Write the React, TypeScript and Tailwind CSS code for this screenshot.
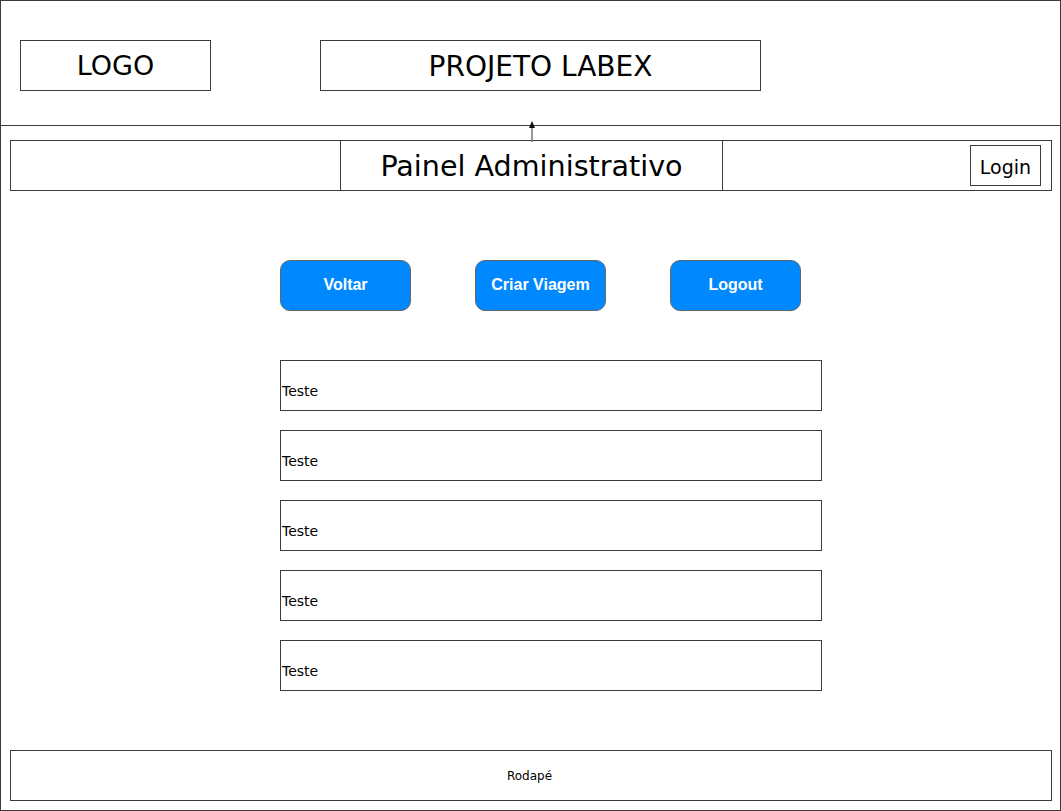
/**
 * Painel Administrativo - wireframe page
 */

const sketchFont = { fontFamily: '"DejaVu Sans", Verdana, sans-serif' };

const ACTIONS = ['Voltar', 'Criar Viagem', 'Logout'];
const TRIPS = ['Teste', 'Teste', 'Teste', 'Teste', 'Teste'];

export default function App() {
  return (
    <div
      className="relative w-[1061px] h-[811px] bg-white border border-[#3c3c3c] flex flex-col text-black"
      style={sketchFont}
    >
      {/* Header */}
      <header className="h-[125px] shrink-0 border-b border-[#3c3c3c] flex items-start pt-[39px] pl-[19px]">
        <div className="w-[191px] h-[51px] border border-[#3c3c3c] flex items-center justify-center text-[27px] pt-[2px]">
          LOGO
        </div>
        <div className="ml-[109px] w-[441px] h-[51px] border border-[#3c3c3c] flex items-center justify-center text-[28px] pt-[2px]">
          PROJETO LABEX
        </div>
      </header>

      {/* Arrow between header and nav */}
      <svg className="absolute left-[527px] top-[120px]" width="8" height="21" viewBox="0 0 8 21">
        <line x1="4" y1="5" x2="4" y2="21" stroke="#777" strokeWidth="1.5" />
        <polygon points="4,0 7,7 1,7" fill="#111" />
      </svg>

      {/* Nav bar */}
      <nav className="mt-[14px] ml-[9px] w-[1042px] h-[51px] shrink-0 border border-[#3c3c3c] flex items-center">
        <div className="ml-[329px] w-[383px] h-full border-x border-[#3c3c3c] flex items-center justify-center text-[28.6px] pt-[2px]">
          Painel Administrativo
        </div>
        <div className="ml-auto mr-[10px] w-[71px] h-[41px] border border-[#3c3c3c] flex items-center justify-center text-[19px] pt-[3px]">
          Login
        </div>
      </nav>

      {/* Action buttons */}
      <div className="mt-[69px] ml-[279px] flex gap-[64px]">
        {ACTIONS.map((label) => (
          <button
            key={label}
            className="w-[131px] h-[51px] rounded-[10px] border border-[#666] bg-[#0088ff] text-white text-[16px] font-bold pb-[2px]"
            style={{ fontFamily: '"Liberation Sans", Arial, sans-serif' }}
          >
            {label}
          </button>
        ))}
      </div>

      {/* Trip list */}
      <div className="mt-[49px] ml-[279px] flex flex-col gap-[19px]">
        {TRIPS.map((name, i) => (
          <div
            key={i}
            className="w-[542px] h-[51px] border border-[#3c3c3c] pl-[1px] pt-[23px] text-[14px] leading-none"
          >
            {name}
          </div>
        ))}
      </div>

      {/* Footer */}
      <footer className="mt-auto mb-[9px] ml-[9px] w-[1042px] h-[51px] shrink-0 border border-[#3c3c3c] flex items-center justify-center text-[12px] pr-[3px]">
        Rodapé
      </footer>
    </div>
  );
}
